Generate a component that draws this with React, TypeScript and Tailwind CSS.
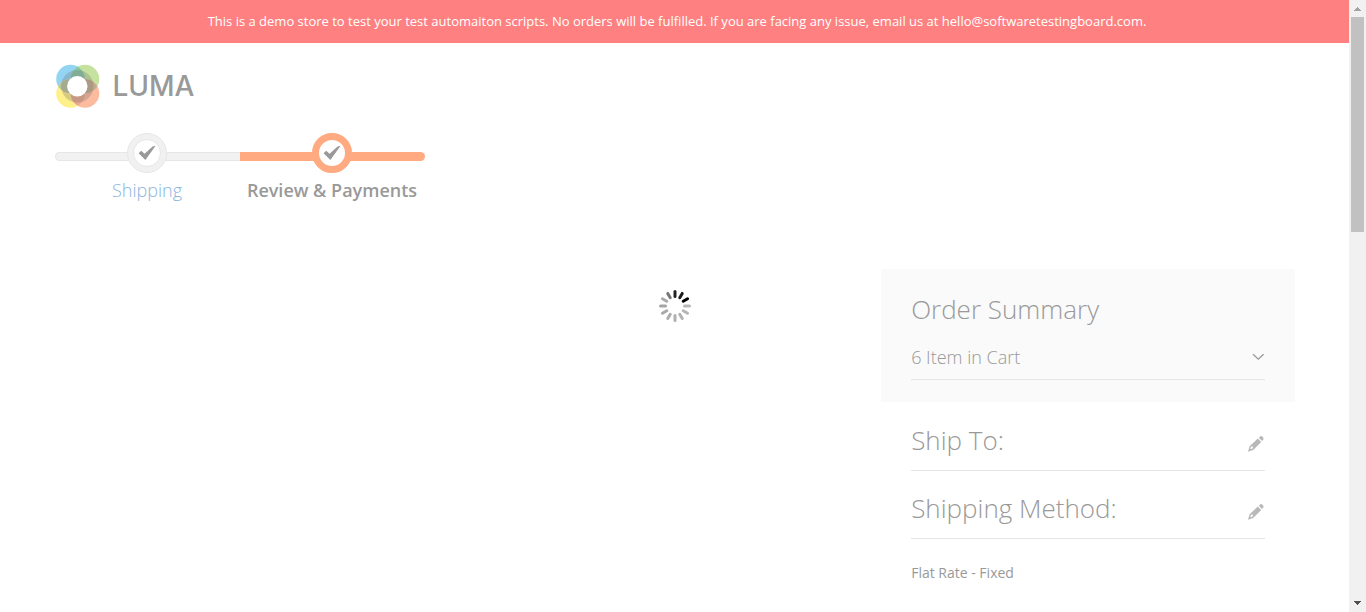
import type { ReactNode } from 'react';

function Logo() {
  return (
    <a href="#" aria-label="Luma home" className="flex w-fit items-center gap-3">
      <svg width="46" height="44" viewBox="0 0 46 44" aria-hidden="true">
        <defs>
          <clipPath id="luma-blue">
            <circle cx="15.5" cy="15" r="14.3" />
          </clipPath>
          <clipPath id="luma-orange">
            <circle cx="30" cy="29.5" r="14.3" />
          </clipPath>
        </defs>
        <circle cx="15.5" cy="15" r="14.3" fill="#92d4f1" />
        <circle cx="30" cy="15" r="14.3" fill="#c5e39f" />
        <circle cx="15.5" cy="29.5" r="14.3" fill="#fff08a" />
        <circle cx="30" cy="29.5" r="14.3" fill="#fbbb9f" />
        <circle cx="30" cy="15" r="14.3" fill="#88c6a6" clipPath="url(#luma-blue)" />
        <circle cx="15.5" cy="29.5" r="14.3" fill="#b9c49a" clipPath="url(#luma-blue)" />
        <circle cx="30" cy="15" r="14.3" fill="#c3ab8d" clipPath="url(#luma-orange)" />
        <circle cx="15.5" cy="29.5" r="14.3" fill="#eba98d" clipPath="url(#luma-orange)" />
        <circle cx="22.3" cy="22.2" r="16.2" fill="#6f6a70" fillOpacity="0.28" />
        <circle cx="22.3" cy="22.2" r="10.2" fill="#fff" />
      </svg>
      <span className="font-['Inter',sans-serif] text-[28px] leading-[44px] font-medium text-[#999]">LUMA</span>
    </a>
  );
}

function Check() {
  return (
    <svg width="18" height="16" viewBox="0 0 18 16" aria-hidden="true">
      <path d="M.6 8.2 3.2 5.7 6.6 8.8 14.6 1.4 17.6.8 7.4 15Z" fill="#999" />
    </svg>
  );
}

function Step({ label, active }: { label: string; active?: boolean }) {
  return (
    <li className="grid w-[185px] justify-items-center">
      <span
        className={
          active
            ? 'col-start-1 row-start-1 h-[9px] w-full self-center rounded-r-full bg-[#ffaa81] mt-[7px]'
            : 'col-start-1 row-start-1 h-[9px] w-full self-center rounded-l-full border border-r-0 border-[#e6e6e6] bg-[#f1f1f1] mt-[7px]'
        }
      />
      <span
        className={
          active
            ? 'z-10 col-start-1 row-start-1 flex size-10 items-center justify-center rounded-full border-[7px] border-[#ffaa81] bg-white'
            : 'z-10 col-start-1 row-start-1 flex size-10 items-center justify-center rounded-full border border-[#e6e6e6] bg-[#f1f1f1]'
        }
      >
        <span
          className={
            active
              ? 'flex size-[26px] items-center justify-center'
              : 'flex size-7 items-center justify-center rounded-full border border-[#e6e6e6] bg-white'
          }
        >
          <Check />
        </span>
      </span>
      {active ? (
        <span className="mt-1 text-[18px] leading-[26px] font-semibold whitespace-nowrap text-[#999]">{label}</span>
      ) : (
        <a href="#shipping" className="mt-1 text-[18px] leading-[26px] font-light text-[#8ab4dc]">
          {label}
        </a>
      )}
    </li>
  );
}

function Spinner() {
  const shades = ['#222', '#1c1c1c', '#000', '#b8b8b8', '#b5b5b5', '#b2b2b2', '#b0b0b0', '#acacac', '#a8a8a8', '#a5a5a5', '#aaa', '#777'];
  return (
    <svg role="img" aria-label="Loading" width="34" height="34" viewBox="-17 -17 34 34">
      {shades.map((shade, i) => (
        <line
          key={i}
          x1="0"
          y1="-9.5"
          x2="0"
          y2="-14.5"
          stroke={shade}
          strokeWidth="3"
          strokeLinecap="round"
          transform={`rotate(${i * 30})`}
        />
      ))}
    </svg>
  );
}

function Pencil() {
  return (
    <svg width="18" height="18" viewBox="0 0 18 18" aria-hidden="true">
      <path
        fillRule="evenodd"
        d="M1 16.8 2.6 11.2 10.8 3.6 14.2 7 6.2 15Z M3.2 14.3 5.6 13.5 6 11.5 4 11.8Z"
        fill="#b8b8b8"
      />
      <path d="M11.8 2.8 13.5 1.3Q14.3.8 15.2 1.6L16.2 2.7Q16.9 3.6 16.3 4.4L15 6.1Z" fill="#b8b8b8" />
    </svg>
  );
}

function Section({ title, edit, children }: { title: string; edit: string; children?: ReactNode }) {
  return (
    <section className="px-[30px]">
      <div className="flex items-center justify-between border-b border-[#e5e5e5] pb-3">
        <h2 className="text-[26px] leading-9 font-light text-[#999]">{title}</h2>
        <button type="button" aria-label={edit} className="mt-[7px]">
          <Pencil />
        </button>
      </div>
      {children}
    </section>
  );
}

function ScrollRail() {
  return (
    <div aria-hidden="true" className="flex w-[17px] shrink-0 flex-col items-center bg-[#f1f1f1]">
      <svg width="17" height="17" viewBox="0 0 17 17" shapeRendering="crispEdges">
        <path d="M5 11h7v-1h-1v-1h-1v-1h-1v-1h-1v1h-1v1h-1v1h-1z" fill="#a3a3a3" />
      </svg>
      <div className="h-[215px] w-[13px] bg-[#c1c1c1]" />
      <svg className="mt-auto" width="17" height="17" viewBox="0 0 17 17" shapeRendering="crispEdges">
        <path d="M5 6h7v1h-1v1h-1v1h-1v1h-1v-1h-1v-1h-1v-1h-1z" fill="#505050" />
      </svg>
    </div>
  );
}

export default function App() {
  return (
    <div className="flex min-h-screen bg-white font-['Open_Sans',sans-serif]">
      <div className="min-w-0 flex-1">
        <p className="bg-[#ff8080] pt-[11px] pr-5 pb-3 pl-[25px] text-center text-[13px] leading-5 text-white">
          This is a demo store to test your test automaiton scripts. No orders will be fulfilled. If you are facing any
          issue, email us at hello@softwaretestingboard.com.
        </p>
        <div className="mx-auto max-w-[1280px] px-5">
          <header className="pt-[21px]">
            <Logo />
          </header>
          <ol className="mt-[25px] flex">
            <Step label="Shipping" />
            <Step label="Review & Payments" active />
          </ol>
          <main className="mt-[66px] grid grid-cols-3">
            <div className="col-span-2" />
            <aside>
              <section className="bg-[#fafafa] px-[30px] pt-[22px] pb-[22px]">
                <h2 className="text-[26px] leading-9 font-light text-[#999]">Order Summary</h2>
                <button
                  type="button"
                  className="mt-[18px] flex w-full items-center justify-between border-b border-[#e5e5e5] pb-[9px] text-[18px] leading-[25px] font-light text-[#999]"
                >
                  6 Item in Cart
                  <svg width="14" height="10" viewBox="0 0 14 10" fill="none" aria-hidden="true">
                    <path d="M2 1.2 7.3 6.2 12.6 1.2" stroke="#999" strokeWidth="1.3" />
                  </svg>
                </button>
              </section>
              <div className="grid gap-[19px] pt-5">
                <Section title="Ship To:" edit="Edit shipping address" />
                <Section title="Shipping Method:" edit="Edit shipping method">
                  <p className="mt-6 text-[14px] leading-5 text-[#999]">Flat Rate - Fixed</p>
                </Section>
              </div>
            </aside>
          </main>
        </div>
      </div>
      <ScrollRail />
      <div className="pointer-events-none fixed inset-y-0 left-0 right-[17px] flex items-center justify-center">
        <Spinner />
      </div>
    </div>
  );
}
